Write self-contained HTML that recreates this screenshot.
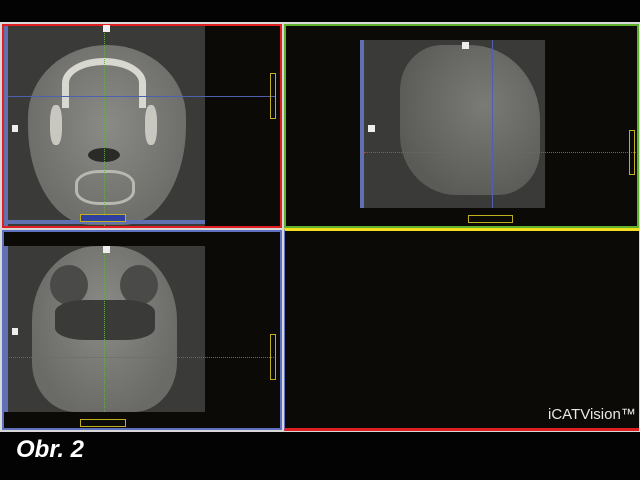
<!DOCTYPE html>
<html><head><style>
body{margin:0;width:640px;height:480px;background:#030303;position:relative;overflow:hidden;font-family:"Liberation Sans",sans-serif}
div{position:absolute;box-sizing:border-box}
.p{background:#0c0a06}
</style></head><body>
<!-- white separators -->
<div style="left:0;top:22px;width:640px;height:410px;background:#d8d8d8"></div>
<!-- top-left -->
<div class="p" style="left:2px;top:24px;width:280px;height:204px;border:2px solid #e02020"></div>
<div style="left:4px;top:26px;width:201px;height:200px;background:#3a3a38"></div>
<div style="left:28px;top:45px;width:158px;height:180px;border-radius:50% 50% 40% 40%/40% 40% 55% 55%;background:radial-gradient(ellipse at 50% 45%,#8a8a86,#6e6e6a 70%)"></div>
<div style="left:62px;top:58px;width:84px;height:50px;border:7px solid #d8d8d0;border-bottom:none;border-radius:50% 50% 0 0"></div>
<div style="left:88px;top:148px;width:32px;height:14px;background:#2a2a28;border-radius:50%"></div>
<div style="left:75px;top:170px;width:60px;height:35px;border:3px solid #b8b8b0;border-radius:40%"></div>
<div style="left:50px;top:105px;width:12px;height:40px;background:#c8c8c0;border-radius:40%"></div>
<div style="left:145px;top:105px;width:12px;height:40px;background:#c8c8c0;border-radius:40%"></div>
<div style="left:4px;top:96px;width:272px;height:1px;background:#5060b0"></div>
<div style="left:104px;top:26px;width:1px;height:200px;border-left:1px dotted #60b040"></div>
<div style="left:4px;top:26px;width:4px;height:200px;background:#6070b0"></div>
<div style="left:4px;top:220px;width:201px;height:4px;background:#6070b0"></div>
<div style="left:80px;top:214px;width:46px;height:8px;border:1px solid #c0b020;background:#3040a0"></div>
<div style="left:270px;top:73px;width:6px;height:46px;border:1px solid #c0b020"></div>
<div style="left:103px;top:25px;width:7px;height:7px;background:#eee"></div>
<div style="left:12px;top:125px;width:6px;height:7px;background:#eee"></div>
<!-- top-right -->
<div class="p" style="left:284px;top:24px;width:355px;height:204px;border:2px solid #60b030;border-bottom-color:#60b030"></div>
<div style="left:360px;top:40px;width:185px;height:168px;background:#3a3a38"></div>
<div style="left:400px;top:45px;width:140px;height:150px;border-radius:30% 50% 30% 40%;background:radial-gradient(ellipse at 60% 40%,#7a7a76,#5a5a56 75%)"></div>
<div style="left:360px;top:40px;width:4px;height:168px;background:#6070b0"></div>
<div style="left:364px;top:152px;width:272px;height:1px;border-top:1px dotted #d04030"></div>
<div style="left:492px;top:40px;width:1px;height:168px;background:#5060b0"></div>
<div style="left:468px;top:215px;width:45px;height:8px;border:1px solid #c0b020"></div>
<div style="left:629px;top:130px;width:6px;height:45px;border:1px solid #c0b020"></div>
<div style="left:462px;top:42px;width:7px;height:7px;background:#eee"></div>
<div style="left:368px;top:125px;width:7px;height:7px;background:#eee"></div>
<!-- bottom-left -->
<div class="p" style="left:2px;top:230px;width:280px;height:200px;border:2px solid #6070c0"></div>
<div style="left:4px;top:246px;width:201px;height:166px;background:#3a3a38"></div>
<div style="left:32px;top:246px;width:145px;height:166px;border-radius:45% 45% 30% 30%;background:radial-gradient(ellipse at 50% 40%,#8a8a86,#6a6a66 75%)"></div>
<div style="left:50px;top:265px;width:38px;height:40px;background:#4a4a48;border-radius:50%"></div>
<div style="left:120px;top:265px;width:38px;height:40px;background:#4a4a48;border-radius:50%"></div>
<div style="left:55px;top:300px;width:100px;height:40px;background:#3a3a38;border-radius:30%"></div>
<div style="left:4px;top:357px;width:272px;height:1px;border-top:1px dotted #d04030"></div>
<div style="left:104px;top:246px;width:1px;height:166px;border-left:1px dotted #60b040"></div>
<div style="left:4px;top:246px;width:4px;height:166px;background:#6070b0"></div>
<div style="left:80px;top:419px;width:46px;height:8px;border:1px solid #c0b020"></div>
<div style="left:270px;top:334px;width:6px;height:46px;border:1px solid #c0b020"></div>
<div style="left:103px;top:246px;width:7px;height:7px;background:#eee"></div>
<div style="left:12px;top:328px;width:6px;height:7px;background:#eee"></div>
<!-- bottom-right -->
<div class="p" style="left:284px;top:228px;width:355px;height:203px;border-top:3px solid #f0e020;border-bottom:3px solid #e02020;border-left:1px solid #6070c0"></div>
<div style="left:548px;top:406px;color:#e8e8e8;font-size:15px;white-space:nowrap">iCATVision™</div>
<div style="left:16px;top:436px;color:#fff;font-size:24px;font-weight:bold;font-style:italic">Obr. 2</div>
</body></html>
